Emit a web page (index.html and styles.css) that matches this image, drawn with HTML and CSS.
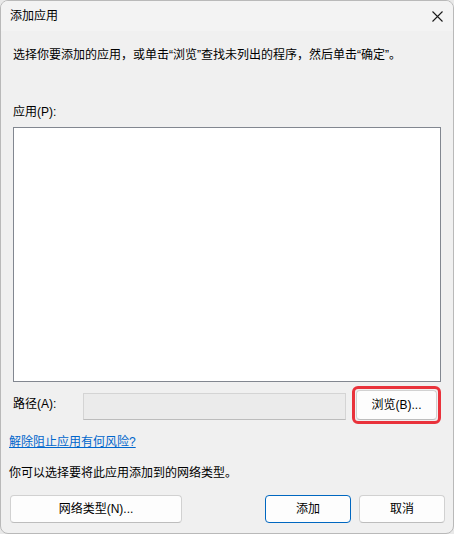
FILE: index.html
```html
<!DOCTYPE html>
<html lang="zh-CN">
<head>
<meta charset="utf-8">
<title>添加应用</title>
<link rel="stylesheet" href="styles.css">
</head>
<body>
<div class="window">
  <div class="titlebar">
    <span class="title">添加应用</span>
    <span class="close" aria-label="关闭">
      <svg width="11" height="11" viewBox="0 0 11 11"><path d="M0.5 0.5 L10.5 10.5 M10.5 0.5 L0.5 10.5" stroke="#1a1a1a" stroke-width="1.1" fill="none"/></svg>
    </span>
  </div>
  <div class="content">
    <p class="text intro">选择你要添加的应用，或单击“浏览”查找未列出的程序，然后单击“确定”。</p>
    <p class="text applabel">应用(P):</p>
    <div class="listbox"></div>
    <div class="pathrow">
      <span class="text pathlabel">路径(A):</span>
      <div class="pathinput"></div>
      <div class="highlight"><button class="btn browse">浏览(B)...</button></div>
    </div>
    <a class="text link" href="#">解除阻止应用有何风险?</a>
    <p class="text hint">你可以选择要将此应用添加到的网络类型。</p>
    <div class="buttons">
      <button class="btn nettype">网络类型(N)...</button>
      <div class="right">
        <button class="btn primary">添加</button>
        <button class="btn cancel">取消</button>
      </div>
    </div>
  </div>
</div>
</body>
</html>
```

FILE: styles.css
```css
* { box-sizing: border-box; }
html, body {
  margin: 0;
  padding: 0;
  background: #e9e9e9;
}
body {
  font-family: "Liberation Sans", "Noto Sans CJK SC", sans-serif;
  font-size: 12px;
  color: #000;
}
.window {
  width: 454px;
  height: 534px;
  border: 1px solid #b9b9b9;
  border-radius: 8px;
  background: #f0f0f0;
  overflow: hidden;
  display: flex;
  flex-direction: column;
}
.titlebar {
  height: 30px;
  flex: none;
  background: #f3f3f3;
  display: flex;
  align-items: center;
  justify-content: space-between;
  padding: 0 10px 0 9px;
}
.title {
  line-height: 16px;
  font-size: 12px;
}
.close {
  display: flex;
  width: 11px;
  height: 11px;
  margin-top: 1px;
}
.content {
  display: flex;
  flex-direction: column;
  padding: 0 8px 0 7px;
}
.text {
  margin: 0;
  line-height: 16px;
  white-space: nowrap;
}
.intro {
  margin-top: 16px;
  padding-left: 5px;
}
.applabel {
  margin-top: 41px;
  padding-left: 5px;
}
.listbox {
  margin-top: 7px;
  margin-left: 5px;
  width: 428px;
  height: 255px;
  background: #fff;
  border: 1px solid #828790;
}
.pathrow {
  margin-top: 4px;
  display: flex;
  align-items: center;
  height: 38px;
}
.pathlabel {
  padding-left: 5px;
  width: 75px;
  margin-bottom: 3px;
}
.pathinput {
  width: 263px;
  height: 27px;
  margin-top: 3px;
  background: #ebebeb;
  border: 1px solid #d4d4d4;
  border-bottom-color: #bcbcbc;
}
.highlight {
  margin-left: 6px;
  width: 89px;
  height: 38px;
  border: 3px solid #e9323b;
  border-radius: 6px;
  padding: 1px;
}
.btn {
  font-family: "Liberation Sans", "Noto Sans CJK SC", sans-serif;
  font-size: 12px;
  color: #000;
  background: #fdfdfd;
  border: 1px solid #d1d1d1;
  border-bottom-color: #bdbdbd;
  border-radius: 4px;
  padding: 0;
  line-height: 16px;
  cursor: default;
}
.browse {
  width: 81px;
  height: 30px;
  display: block;
}
.link {
  margin-top: 10px;
  padding-left: 1px;
  color: #0066cc;
  text-decoration: underline;
  align-self: flex-start;
}
.hint {
  margin-top: 15px;
  padding-left: 1px;
}
.buttons {
  margin-top: 14px;
  display: flex;
  justify-content: space-between;
  padding-left: 2px;
}
.right {
  display: flex;
  gap: 8px;
}
.nettype {
  width: 172px;
  height: 28px;
}
.primary, .cancel {
  width: 86px;
  height: 28px;
}
.primary {
  border-color: #0067c0;
}
```
